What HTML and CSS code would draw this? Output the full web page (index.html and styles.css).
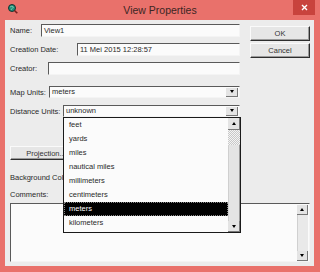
FILE: index.html
```html
<!DOCTYPE html>
<html lang="en">
<head>
  <meta charset="UTF-8">
  <title>View Properties</title>
  <link rel="stylesheet" href="styles.css">
</head>
<body>
  <div class="window">
    <div class="titlebar">
      <svg class="app-icon" width="10" height="10" viewBox="0 0 10 10">
        <circle cx="4" cy="4" r="3.5" fill="#1f8f7c" stroke="#14322d" stroke-width="1"/>
        <path d="M2 3 Q4 1.5 5.5 3 Q4 4.5 3 6" fill="none" stroke="#8fd0b0" stroke-width="0.8"/>
        <path d="M6.5 6.5 L9.3 9.3" stroke="#7a1f1f" stroke-width="1.6"/>
      </svg>
      <span class="title">View Properties</span>
      <span class="close">
        <svg width="7" height="7" viewBox="0 0 7 7">
          <path d="M1 1 L6 6 M6 1 L1 6" stroke="#fff" stroke-width="1.4"/>
        </svg>
      </span>
    </div>

    <div class="client">
      <div class="top">
        <div class="fields">
          <div class="row">
            <span class="lbl lbl-name">Name:</span>
            <div class="field">View1</div>
          </div>
          <div class="row">
            <span class="lbl lbl-date">Creation Date:</span>
            <div class="field">11 Mei 2015 12:28:57</div>
          </div>
          <div class="row row-gap">
            <span class="lbl lbl-creator">Creator:</span>
            <div class="field"></div>
          </div>
          <div class="row combo-row">
            <span class="lbl lbl-map">Map Units:</span>
            <div class="field combo">
              <span class="combo-text">meters</span>
              <span class="drop-btn"><i class="arrow-down"></i></span>
            </div>
          </div>
          <div class="row combo-row last">
            <span class="lbl lbl-dist">Distance Units:</span>
            <div class="field combo">
              <span class="combo-text">unknown</span>
              <span class="drop-btn"><i class="arrow-down"></i></span>
            </div>
          </div>
        </div>
        <div class="buttons">
          <button class="btn">OK</button>
          <button class="btn">Cancel</button>
        </div>
      </div>

      <button class="btn btn-proj">Projection...</button>
      <div class="lbl-line bg-line">Background Color:</div>
      <div class="lbl-line">Comments:</div>

      <div class="comments">
        <div class="comments-text"></div>
        <div class="sb sb-comments">
          <span class="sb-btn"><i class="arrow-up"></i></span>
          <span class="sb-track"></span>
          <span class="sb-btn"><i class="arrow-down"></i></span>
        </div>
      </div>

      <div class="droplist">
        <ul class="items">
          <li>feet</li>
          <li>yards</li>
          <li>miles</li>
          <li>nautical miles</li>
          <li>millimeters</li>
          <li>centimeters</li>
          <li class="selected">meters</li>
          <li>kilometers</li>
        </ul>
        <div class="sb sb-list">
          <span class="sb-btn sb-up"><i class="arrow-up"></i></span>
          <span class="sb-dither"></span>
          <span class="sb-thumb"></span>
          <span class="sb-btn"><i class="arrow-down"></i></span>
        </div>
      </div>
    </div>
  </div>
</body>
</html>
```

FILE: styles.css
```css
body { margin: 0; font-family: "Liberation Sans", Arial, sans-serif; font-size: 7.5px; color: #2a2a2a; }
.window {
  width: 320px; height: 272px; background: #e9716b;
  display: flex; flex-direction: column; box-sizing: border-box;
}
.titlebar {
  height: 20px; display: grid; grid-template-columns: 1fr auto 1fr;
  align-items: start;
}
.app-icon { margin: 4px 0 0 8px; }
.title { font-size: 10.5px; color: #3b2624; line-height: 20px; }
.close {
  justify-self: end; width: 22px; height: 15px; margin-right: 5px;
  background: #c8433d; display: flex; align-items: center; justify-content: center;
}
.client {
  flex: 1; margin: 0 6px 6px 5px; background: #ececec;
  padding: 4px 4px 0 5px; position: relative;
}
.top { display: flex; }
.fields { width: 230px; }
.row { display: flex; align-items: center; height: 13px; margin-bottom: 6px; }
.row-gap { margin-bottom: 11px; }
.combo-row { height: 12px; margin-bottom: 7px; }
.combo-row.last { margin-bottom: 0; }
.lbl { flex: none; }
.lbl-name { width: 31px; }
.lbl-date { width: 67px; }
.lbl-creator { width: 38px; }
.lbl-map { width: 39px; }
.lbl-dist { width: 53px; }
.field {
  flex: 1; height: 100%; box-sizing: border-box;
  background: #fbfbfb; border: 1px solid; border-color: #5a5a5a #f4f4f4 #f4f4f4 #5a5a5a;
  padding-left: 2px; line-height: 11px;
}
.combo { display: flex; align-items: center; padding-right: 1px; line-height: 10px; }
.combo-text { flex: 1; }
.drop-btn {
  width: 11px; height: 8px; background: #e4e4e4;
  border-right: 1px solid #777; border-bottom: 1px solid #777;
  display: flex; align-items: center; justify-content: center;
}
.arrow-down { border-left: 2.5px solid transparent; border-right: 2.5px solid transparent; border-top: 3px solid #000; }
.arrow-up { border-left: 2.5px solid transparent; border-right: 2.5px solid transparent; border-bottom: 3px solid #000; }
.buttons { width: 60px; margin-left: 10px; padding-top: 2px; display: flex; flex-direction: column; gap: 2px; }
.btn {
  font: inherit; color: #333; height: 15px; padding: 0;
  background: #e6e6e6; border: 1px solid; border-color: #fafafa #2e2e2e #2e2e2e #fafafa;
  box-shadow: inset -1px -1px 0 #9a9a9a;
}
.btn-proj { display: block; width: 72px; height: 14px; margin-top: 29px; }
.lbl-line { height: 12px; line-height: 12px; }
.bg-line { margin-top: 12px; }
.bg-line + .lbl-line { margin-top: 5px; }
.comments {
  margin-top: 2px; height: 59px; box-sizing: border-box; display: flex;
  background: #fbfbfb; border: 1px solid; border-color: #5a5a5a #f4f4f4 #f4f4f4 #5a5a5a;
  padding: 1px 1px 0 0;
}
.comments-text { flex: 1; }
.sb { display: flex; flex-direction: column; width: 11px; }
.sb-btn {
  height: 10px; flex: none; background: #e4e4e4;
  border-right: 1px solid #777; border-bottom: 1px solid #777; box-sizing: border-box;
  display: flex; align-items: center; justify-content: center;
}
.sb-track { flex: 1; background: #e9e9e9; border-left: 1px solid #d0d0d0; }
.droplist {
  position: absolute; left: 58px; top: 97px; width: 178px; height: 116px;
  box-sizing: border-box; background: #fbfbfb; border: 1px solid #1a1a1a;
  display: flex;
}
.items { list-style: none; margin: 0; padding: 0; flex: 1; color: #2a2a2a; }
.items li { height: 14px; line-height: 14px; padding-left: 5px; }
.items li.selected {
  background: #000; color: #fff; outline: 1px dotted #888; outline-offset: -1px;
}
.sb-list { width: 12px; }
.sb-list .sb-btn { height: 11px; }
.sb-up { height: 12px !important; }
.sb-dither {
  height: 15px; flex: none;
  background: repeating-conic-gradient(#c8c8c8 0 25%, #f4f4f4 0 50%) 0 0 / 2px 2px;
}
.sb-thumb { flex: 1; background: #e4e4e4; border-left: 1px solid #cfcfcf; border-right: 1px solid #999; }
```
